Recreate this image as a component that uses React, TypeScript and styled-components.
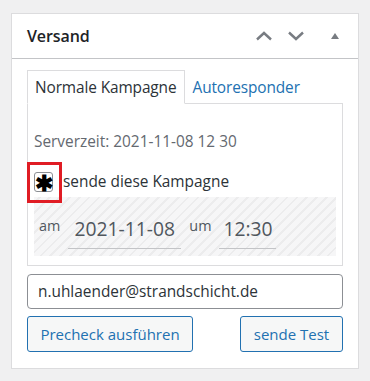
import React from 'react'
import styled, { createGlobalStyle } from 'styled-components'

const Global = createGlobalStyle`
  body {
    margin: 0;
    background: #f0f0f1;
    font-family: 'Open Sans', 'Noto Sans', sans-serif;
    color: #1d2327;
  }
`

const Page = styled.div`
  padding: 13px 11px;
`

const Card = styled.div`
  width: 346px;
  background: #fff;
  border: 1px solid #dcdcde;
`

const Header = styled.div`
  display: flex;
  align-items: center;
  height: 44px;
  padding: 0 19px 0 15px;
  border-bottom: 1px solid #c3c4c7;
`

const Title = styled.h2`
  flex: 1;
  margin: 0;
  font-size: 16px;
  font-weight: 600;
  letter-spacing: -0.1px;
`

const HeaderIcons = styled.div`
  display: flex;
  align-items: center;
  gap: 14px;
  color: #787c82;
`

const Body = styled.div`
  padding: 11px 15px 16px;
`

const Tabs = styled.div`
  display: flex;
  margin-bottom: -1px;
`

const Tab = styled.div<{ active?: boolean }>`
  height: 32px;
  display: flex;
  align-items: center;
  padding: 0 7px 0 7px;
  font-size: 15.4px;
  letter-spacing: -0.1px;
  color: ${p => (p.active ? '#2c3338' : '#2271b1')};
  background: #fff;
  border: 1px solid ${p => (p.active ? '#dcdcde' : 'transparent')};
  border-bottom: ${p => (p.active ? '1px solid #fff' : 'none')};
  position: relative;
`

const Panel = styled.div`
  box-sizing: border-box;
  border: 1px solid #dcdcde;
  height: 163px;
  padding: 27px 6px 0;
`

const ServerTime = styled.div`
  font-size: 15.4px;
  line-height: 21px;
  color: #646970;
`

const CheckRow = styled.label`
  display: flex;
  align-items: center;
  gap: 10px;
  margin-top: 20px;
  font-size: 15.4px;
  line-height: 20px;
  color: #2c3338;
  position: relative;
`

const Checkbox = styled.span`
  width: 17px;
  height: 18px;
  border: 1px solid #8c8f94;
  border-radius: 3px;
  display: flex;
  align-items: center;
  justify-content: center;
  font-size: 22px;
  font-weight: 700;
  line-height: 18px;
  color: #000;
  background: #fff;
`

const Highlight = styled.span`
  position: absolute;
  left: -7px;
  top: -10px;
  width: 29px;
  height: 35px;
  border: 3px solid #e01c24;
  pointer-events: none;
`

const Schedule = styled.div`
  margin-top: 5px;
  height: 59px;
  display: flex;
  align-items: center;
  padding: 0 5px;
  gap: 8px;
  background: repeating-linear-gradient(
    -45deg,
    #f6f6f7 0,
    #f6f6f7 5px,
    #ececed 5px,
    #ececed 7px
  );
`

const Small = styled.span`
  font-size: 14.4px;
  color: #50575e;
  margin-top: -3px;
`

const DateField = styled.span<{ w: number }>`
  width: ${p => p.w}px;
  font-size: 19.3px;
  color: #50575e;
  border-bottom: 1px solid #c3c4c7;
  padding: 4px 0 6px;
  text-align: center;
  margin-top: 6px;
`

const Email = styled.div`
  box-sizing: border-box;
  margin-top: 8px;
  height: 35px;
  border: 1px solid #8c8f94;
  border-radius: 4px;
  display: flex;
  align-items: center;
  padding: 0 10px;
  font-size: 15.4px;
  color: #2c3338;
`

const Actions = styled.div`
  display: flex;
  justify-content: space-between;
  margin-top: 7px;
`

const Button = styled.button<{ w: number }>`
  width: ${p => p.w}px;
  height: 36px;
  border: 1px solid #2271b1;
  border-radius: 3px;
  background: #f6f7f7;
  color: #2271b1;
  font-family: inherit;
  font-size: 15px;
  padding: 0;
`

const Chevron = ({ up }: { up?: boolean }) => (
  <svg width="18" height="10" viewBox="0 0 18 10">
    <path
      d={up ? 'M2 8.5 L9 2 L16 8.5' : 'M2 1.5 L9 8 L16 1.5'}
      fill="none"
      stroke="currentColor"
      strokeWidth="2.4"
    />
  </svg>
)

const Caret = () => (
  <svg width="8" height="6" viewBox="0 0 8 6" style={{ marginLeft: 12 }}>
    <path d="M0 6 L4 0 L8 6 Z" fill="currentColor" />
  </svg>
)

export default function App() {
  return (
    <Page>
      <Global />
      <Card>
        <Header>
          <Title>Versand</Title>
          <HeaderIcons>
            <Chevron up />
            <Chevron />
            <Caret />
          </HeaderIcons>
        </Header>
        <Body>
          <Tabs>
            <Tab active>Normale Kampagne</Tab>
            <Tab>Autoresponder</Tab>
          </Tabs>
          <Panel>
            <ServerTime>Serverzeit: 2021-11-08 12 30</ServerTime>
            <CheckRow>
              <Checkbox>✱</Checkbox>
              <Highlight />
              sende diese Kampagne
            </CheckRow>
            <Schedule>
              <Small>am</Small>
              <DateField w={113}>2021-11-08</DateField>
              <Small>um</Small>
              <DateField w={57}>12:30</DateField>
            </Schedule>
          </Panel>
          <Email>n.uhlaender@strandschicht.de</Email>
          <Actions>
            <Button w={166}>Precheck ausführen</Button>
            <Button w={103}>sende Test</Button>
          </Actions>
        </Body>
      </Card>
    </Page>
  )
}
